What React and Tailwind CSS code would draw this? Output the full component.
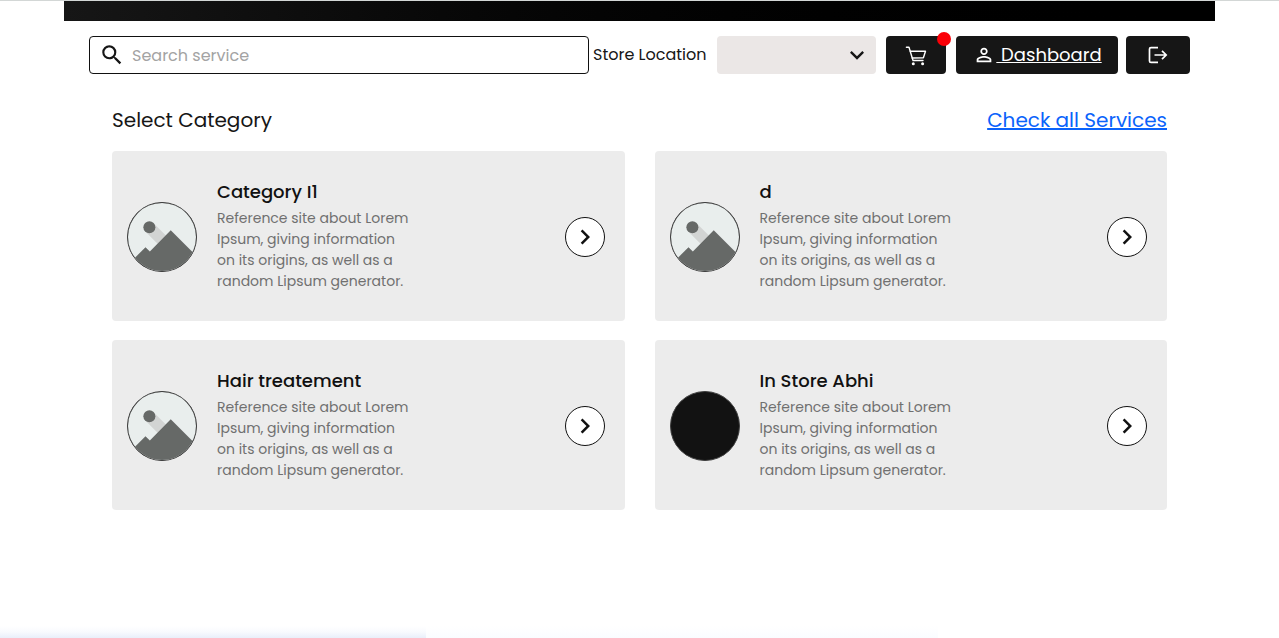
import { MdSearch, MdKeyboardArrowDown, MdKeyboardArrowRight, MdPersonOutline } from "react-icons/md";

const categories = [
  { name: "Category I1" },
  { name: "d" },
  { name: "Hair treatement" },
  { name: "In Store Abhi", dark: true },
];

function Placeholder() {
  return (
    <svg viewBox="0 0 70 70" className="size-full" aria-hidden="true">
      <rect width="70" height="70" fill="#e9eeed" />
      <path d="M26 20.5 L39 33.5 L31 42.5 L17.5 29 Z" fill="#d2d4d3" />
      <circle cx="22" cy="25" r="6.2" fill="#666967" />
      <path d="M0 63.5 L18 45.5 L22.5 50 L44 28 L70 54 V70 H0 Z" fill="#666967" />
    </svg>
  );
}

function CartIcon() {
  return (
    <svg viewBox="0 0 24 24" className="size-6" fill="none" stroke="currentColor" strokeWidth="1.4" strokeLinecap="round" strokeLinejoin="round" aria-hidden="true">
      <path d="M2.4 4.2H5L9 17.5H19" />
      <path d="M6.3 8.3H21.5L19.4 14.8L8.2 15" />
      <circle cx="9.3" cy="20.8" r="1.5" fill="currentColor" stroke="none" />
      <circle cx="18.6" cy="20.8" r="1.5" fill="currentColor" stroke="none" />
    </svg>
  );
}

function LogoutIcon() {
  return (
    <svg viewBox="0 0 24 24" className="size-6" fill="none" stroke="currentColor" strokeWidth="1.7" aria-hidden="true">
      <path d="M12 4.6H5A1.5 1.5 0 0 0 3.5 6.1V17.9A1.5 1.5 0 0 0 5 19.4H12" />
      <path d="M8.5 12H20M16 7.8L20.2 12L16 16.2" />
    </svg>
  );
}

function CategoryCard({ name, dark }) {
  return (
    <article className="flex items-center rounded bg-[#ececec] pt-[30px] pr-5 pb-[29px] pl-[15px]">
      <div className="size-[70px] shrink-0 overflow-hidden rounded-full border border-[#3f3f3f] bg-[#121212]">
        {!dark && <Placeholder />}
      </div>
      <div className="ml-5 w-[196px]">
        <h2 className="text-lg leading-[22px] font-medium text-[#111111]">{name}</h2>
        <p className="mt-[5px] text-sm leading-[21px] text-[#707070]">
          Reference site about Lorem Ipsum, giving information on its origins, as well as a random Lipsum generator.
        </p>
      </div>
      <button
        type="button"
        aria-label={`Open ${name}`}
        className="ml-auto flex size-10 shrink-0 items-center justify-center rounded-full border border-[#111111] bg-white text-[#111111]"
      >
        <MdKeyboardArrowRight className="size-[30px]" />
      </button>
    </article>
  );
}

export default function App() {
  return (
    <div className="flex min-h-screen flex-col border-t border-[#d3d7d6] bg-white font-[Poppins,Inter,sans-serif] text-[#161616]">
      <div className="mx-16 h-5 bg-linear-to-r from-[#161616] to-black" />
      <header className="mx-[89px] mt-[15px] flex h-[38px] items-stretch">
        <label className="flex w-[500px] items-center rounded border border-[#111111] pl-[9px]">
          <MdSearch className="size-[26px] shrink-0" />
          <input
            type="search"
            aria-label="Search service"
            placeholder="Search service"
            className="ml-[7px] min-w-0 flex-1 bg-transparent pt-px text-base outline-none placeholder:text-[#a3a3a3]"
          />
        </label>
        <label htmlFor="store" className="ml-1 self-center text-base whitespace-nowrap">
          Store Location
        </label>
        <div className="relative ml-auto w-[159px]">
          <select id="store" className="size-full appearance-none rounded bg-[#ebe7e6] px-3" />
          <MdKeyboardArrowDown className="pointer-events-none absolute top-[5px] right-[5px] size-7" />
        </div>
        <button type="button" aria-label="Cart" className="relative ml-[10px] flex w-[60px] items-center justify-center rounded bg-[#161616] text-white">
          <CartIcon />
          <span className="absolute -top-1 -right-[5px] size-[14px] rounded-full bg-[#fb0007]" />
        </button>
        <a href="#dashboard" className="ml-[10px] flex w-[162px] items-center justify-center rounded bg-[#161616] text-lg whitespace-pre text-white">
          <MdPersonOutline className="mx-px size-[22px]" />
          <span className="underline"> Dashboard</span>
        </a>
        <button type="button" aria-label="Log out" className="ml-2 flex w-16 items-center justify-center rounded bg-[#161616] text-white">
          <LogoutIcon />
        </button>
      </header>
      <main className="mx-28 mt-[30px]">
        <div className="flex items-center justify-between text-xl leading-8">
          <h1>Select Category</h1>
          <a href="#services" className="text-[#0b63fb] underline">Check all Services</a>
        </div>
        <section className="mt-[15px] grid grid-cols-2 gap-x-[30px] gap-y-[19px]">
          {categories.map((c) => (
            <CategoryCard key={c.name} name={c.name} dark={c.dark} />
          ))}
        </section>
      </main>
      <div className="mt-auto flex h-3 overflow-hidden">
        <div className="w-1/3 bg-linear-to-b from-white via-[#f8fafe] to-[#e9effa]" />
        <div className="w-2/5 bg-linear-to-b from-white to-[#fafcff]" />
      </div>
    </div>
  );
}
